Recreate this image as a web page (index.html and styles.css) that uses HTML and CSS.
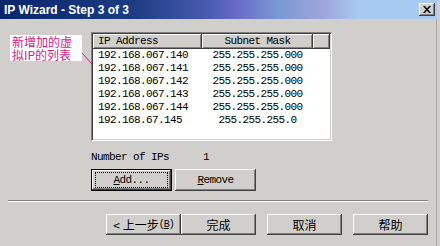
FILE: index.html
```html
<!DOCTYPE html>
<html>
<head>
    <meta charset='utf-8'>
    <title>IP Wizard - Step 3 of 3</title>
    <link rel="stylesheet" href="styles.css">
</head>
<body>
    <div class="window">
        <div class="titlebar">
            <span class="title">IP Wizard - Step 3 of 3</span>
            <span class="close">
                <svg width="8" height="7" viewBox="0 0 8 7"><path d="M0 0h2l2 2.5L6 0h2L5 3.5 8 7H6L4 4.5 2 7H0l3-3.5z" fill="#000"/></svg>
            </span>
        </div>
        <div class="body">
            <div class="top">
                <div class="note">新增加的虚<br>拟IP的列表</div>
                <div class="list">
                    <div class="head">
                        <div class="hcell c1">IP Address</div>
                        <div class="hcell c2">Subnet Mask</div>
                        <div class="hcell c3"></div>
                    </div>
                    <div class="row"><span class="c1">192.168.067.140</span><span class="c2">255.255.255.000</span></div>
                    <div class="row"><span class="c1">192.168.067.141</span><span class="c2">255.255.255.000</span></div>
                    <div class="row"><span class="c1">192.168.067.142</span><span class="c2">255.255.255.000</span></div>
                    <div class="row"><span class="c1">192.168.067.143</span><span class="c2">255.255.255.000</span></div>
                    <div class="row"><span class="c1">192.168.067.144</span><span class="c2">255.255.255.000</span></div>
                    <div class="row"><span class="c1">192.168.67.145</span><span class="c2">255.255.255.0</span></div>
                </div>
            </div>
            <svg class="pointer" width="14" height="16" viewBox="0 0 14 16"><line x1="2" y1="2" x2="12" y2="13" stroke="#d81b8c" stroke-width="1"/></svg>
            <div class="count"><span class="count-label">Number of IPs</span><span>1</span></div>
            <div class="actions">
                <button class="btn default"><span class="focus"><u>A</u>dd...</span></button>
                <button class="btn"><u>R</u>emove</button>
            </div>
            <div class="sep"></div>
            <div class="footer">
                <button class="btn wide">&lt; 上一步<span class="acc">(<u>B</u>)</span></button>
                <button class="btn wide">完成</button>
                <button class="btn wide gap">取消</button>
                <button class="btn wide gap">帮助</button>
            </div>
        </div>
    </div>
</body>
</html>
```

FILE: styles.css
```css
* {
    box-sizing: border-box;
}
body {
    margin: 0;
    background: #d0cfcc;
}
.window {
    width: 440px;
    height: 246px;
    background: #d0cfcc;
    border-right: 3px solid #d0cfcc;
    box-shadow: inset -4px 0 0 -3px #a8a8a8;
    display: flex;
    flex-direction: column;
    font-family: "Liberation Mono", monospace;
    font-size: 11px;
    letter-spacing: -0.6px;
    color: #000;
}
.titlebar {
    height: 19px;
    display: flex;
    align-items: center;
    justify-content: space-between;
    padding: 0 2px 0 4px;
    background: linear-gradient(to right, #0a246a 0%, #1c3c82 30%, #4a5cb0 48%, #6a6ac8 54%, #7a9ad2 64%, #a0a4dc 74%, #a6caf0 82%, #a6caf0 100%);
}
.title {
    font-family: "Liberation Sans", Arial, sans-serif;
    font-weight: bold;
    font-size: 12px;
    letter-spacing: 0;
    color: #fff;
}
.close {
    width: 16px;
    height: 13px;
    background: #d0cfcc;
    box-shadow: inset -1px -1px #404040, inset 1px 1px #fff, inset -2px -2px #808080;
    display: flex;
    align-items: center;
    justify-content: center;
    padding-bottom: 1px;
}
.body {
    position: relative;
    flex: 1;
    padding-top: 13px;
    display: flex;
    flex-direction: column;
}
.top {
    display: grid;
    grid-template-columns: 91px 241px;
    align-items: start;
}
.note {
    justify-self: start;
    margin: 3px 0 0 10px;
    padding: 0 10px 0 2px;
    background: #fff;
    color: #d81b8c;
    font-family: "Noto Sans CJK SC", sans-serif;
    font-size: 12px;
    line-height: 13px;
    letter-spacing: 0;
}
.pointer {
    position: absolute;
    left: 80px;
    top: 32px;
}
.list {
    height: 109px;
    background: #fff;
    border: 1px solid;
    border-color: #808080 #fff #fff #808080;
    box-shadow: inset 1px 1px #404040, inset -1px -1px #d0cfcc;
    padding: 1px;
}
.head {
    display: flex;
    height: 15px;
}
.hcell {
    background: #d0cfcc;
    box-shadow: inset -1px -1px #404040, inset 1px 1px #fff, inset -2px -2px #808080;
    line-height: 15px;
}
.head .c1 {
    width: 109px;
    padding-left: 5px;
}
.head .c2 {
    width: 111px;
    text-align: center;
}
.head .c3 {
    flex: 1;
}
.row {
    display: flex;
    height: 13px;
    line-height: 13px;
}
.row .c1 {
    width: 109px;
    padding-left: 5px;
}
.row .c2 {
    width: 111px;
    text-align: center;
}
.count {
    margin: 10px 0 0 91px;
    height: 12px;
    line-height: 12px;
    display: flex;
}
.count-label {
    width: 112px;
}
.actions {
    margin: 6px 0 0 91px;
    display: flex;
    gap: 3px;
}
.btn {
    width: 81px;
    height: 22px;
    padding: 0;
    border: none;
    background: #d0cfcc;
    box-shadow: inset -1px -1px #404040, inset 1px 1px #fff, inset -2px -2px #808080;
    font-family: "Liberation Mono", monospace;
    font-size: 11px;
    letter-spacing: -0.6px;
    color: #000;
    display: flex;
    align-items: center;
    justify-content: center;
}
.btn.default {
    border: 1px solid #000;
    padding: 2px 3px;
}
.focus {
    flex: 1;
    align-self: stretch;
    display: flex;
    align-items: center;
    justify-content: center;
    border: 1px dotted #000;
}
.sep {
    margin: 9px 0 0 8px;
    width: 420px;
    height: 2px;
    border-top: 1px solid #808080;
    border-bottom: 1px solid #fff;
}
.footer {
    margin-top: 12px;
    padding-right: 9px;
    display: flex;
    justify-content: flex-end;
}
.btn.wide {
    width: 75px;
    height: 21px;
    font-family: "Noto Sans CJK SC", sans-serif;
    font-size: 12px;
    letter-spacing: 0;
}
.btn.gap {
    margin-left: 11px;
}
.acc {
    font-family: "Liberation Mono", monospace;
    font-size: 10px;
    letter-spacing: -1px;
}
```
